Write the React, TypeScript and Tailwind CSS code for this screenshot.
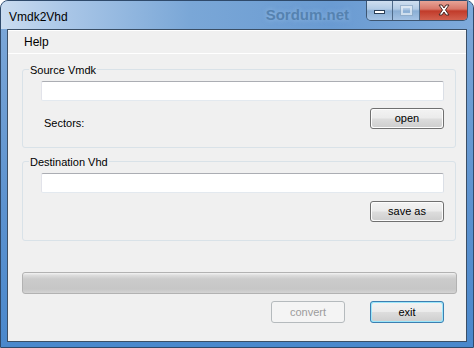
import React from 'react';

const font = { fontFamily: '"Liberation Sans", Arial, sans-serif' };

function Btn({ label, variant }: { label: string; variant?: 'default' | 'disabled' }) {
  if (variant === 'disabled') {
    return (
      <div className="w-[74px] h-[22px] rounded-[3px] border border-[#b5babd] bg-[#f4f4f4] flex items-center justify-center text-[11px] text-[#9c9c9c]">
        {label}
      </div>
    );
  }
  const isDefault = variant === 'default';
  return (
    <div
      className={
        'w-[74px] rounded-[3px] border p-px ' +
        (isDefault ? 'h-[22px] border-[#3c7fb1] bg-[#9ce6fa]' : 'h-[21px] border-[#707070] bg-[#fcfcfc]')
      }
    >
      <div className="h-full w-full rounded-[2px] bg-[linear-gradient(180deg,#f2f2f2_0%,#ebebeb_48%,#dddddd_52%,#cfcfcf_100%)] flex items-center justify-center text-[11px] text-black">
        {label}
      </div>
    </div>
  );
}

function TextBox() {
  return (
    <div className="h-[20px] w-[403px] ml-[18px] bg-white border border-t-[#abadb3] border-l-[#e2e3ea] border-r-[#dbdfe6] border-b-[#e3e9ef] rounded-[2px]" />
  );
}

function Group({ title, children, height }: { title: string; children: React.ReactNode; height: string }) {
  return (
    <div className={'relative ml-[14px] w-[434px] rounded-[3px] border border-[#d9e2e8] ' + height}>
      <span className="absolute left-[6px] -top-[7px] px-[1px] bg-[#f0f0f0] text-[11px] leading-[14px] text-black">
        {title}
      </span>
      {children}
    </div>
  );
}

export default function App() {
  return (
    <div className="w-[474px] h-[348px] bg-white" style={font}>
      <div className="h-full w-full rounded-t-[8px] border border-[#2f4a6b] bg-[linear-gradient(180deg,#7fa9d8_0%,#5c92cf_60%,#4a88cc_100%)] flex flex-col px-[6px] pb-[5px] overflow-hidden">
        {/* title bar */}
        <div className="-mx-[6px] h-[28px] flex items-start bg-[linear-gradient(90deg,#cadcf0_0%,#a9c6e7_14%,#7aa7d7_40%,#6a9bd2_70%,#7eaadb_100%)]">
          <span className="pl-[8px] pt-[9px] text-[12px] leading-[14px] text-black">Vmdk2Vhd</span>
          <span className="ml-auto mr-[17px] pt-[5px] text-[15px] leading-[18px] font-bold text-[#5582b0] [text-shadow:0_0_5px_rgba(170,205,240,0.6)]">
            Sordum.net
          </span>
          <div className="mr-[5px] -mt-px h-[21px] flex rounded-b-[5px] border border-t-0 border-[#3d5672] overflow-hidden">
            <div className="w-[26px] flex items-center justify-center border-r border-[#4f6b8a] bg-[linear-gradient(180deg,#d2e1f1_0%,#b3cbe5_45%,#8aaed4_55%,#a5c3e4_100%)]">
              <div className="w-[11px] h-[4px] bg-white border border-[#2b3f57] mt-[4px]" />
            </div>
            <div className="w-[27px] flex items-center justify-center border-r border-[#4f6b8a] bg-[linear-gradient(180deg,#d2e1f1_0%,#b3cbe5_45%,#8aaed4_55%,#a5c3e4_100%)]">
              <div className="w-[11px] h-[9px] border-2 border-[#e8eff7] outline outline-1 outline-[#8ea8c4] opacity-70" />
            </div>
            <div className="w-[47px] flex items-center justify-center bg-[linear-gradient(180deg,#e9a99c_0%,#d8786a_45%,#c13b2a_55%,#d2614f_100%)]">
              <svg width="14" height="12" viewBox="0 0 14 12">
                <path d="M2 1 L5 1 L7 4 L9 1 L12 1 L8.5 6 L12 11 L9 11 L7 8 L5 11 L2 11 L5.5 6 Z" fill="#fff" stroke="#4a2a26" strokeWidth="1" />
              </svg>
            </div>
          </div>
        </div>

        {/* client area */}
        <div className="flex-1 border border-[#3b4f66] bg-[#f0f0f0] flex flex-col text-[11px]">
          <div className="h-[24px] border-t border-b border-white flex items-center">
            <span className="ml-[16px] text-[12px] text-black">Help</span>
          </div>

          <div className="mt-[15px]">
            <Group title="Source Vmdk" height="h-[79px]">
              <div className="mt-[11px]">
                <TextBox />
              </div>
              <div className="mt-[7px] ml-[18px] w-[403px] flex items-start justify-between">
                <span className="pl-[3px] mt-[9px] leading-[13px] text-black">Sectors:</span>
                <Btn label="open" />
              </div>
            </Group>
          </div>

          <div className="mt-[13px]">
            <Group title="Destination Vhd" height="h-[80px]">
              <div className="mt-[11px]">
                <TextBox />
              </div>
              <div className="mt-[8px] ml-[18px] w-[403px] flex justify-end">
                <Btn label="save as" />
              </div>
            </Group>
          </div>

          <div className="mt-[31px] ml-[14px] w-[435px] h-[22px] rounded-[3px] border border-[#b2b2b2] bg-[linear-gradient(180deg,#f3f3f3_0%,#dcdcdc_12%,#cbcbcb_30%,#c6c6c6_80%,#d4d4d4_100%)]" />

          <div className="mt-[7px] flex justify-end gap-[25px] pr-[22px]">
            <Btn label="convert" variant="disabled" />
            <Btn label="exit" variant="default" />
          </div>
        </div>
      </div>
    </div>
  );
}
